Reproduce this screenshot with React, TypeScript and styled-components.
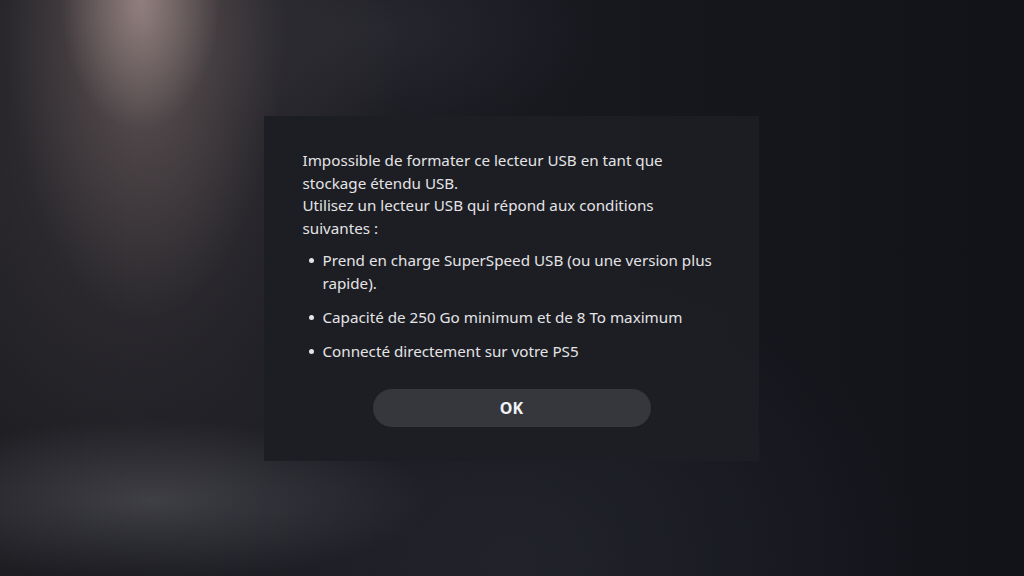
import React from "react";
import styled, { createGlobalStyle } from "styled-components";

const GlobalStyle = createGlobalStyle`
  html, body {
    margin: 0;
    padding: 0;
    width: 100%;
    height: 100%;
    overflow: hidden;
  }
  body {
    background: #14161c;
    font-family: "Noto Sans", "Open Sans", sans-serif;
  }
`;

const Screen = styled.div`
  position: relative;
  width: 1024px;
  height: 576px;
  display: flex;
  align-items: flex-start;
  justify-content: center;
  background:
    radial-gradient(ellipse 80px 130px at 140px 0px, rgba(200, 175, 170, 0.5), rgba(200, 175, 170, 0) 100%),
    radial-gradient(ellipse 140px 300px at 145px 20px, rgba(140, 120, 118, 0.45), rgba(140, 120, 118, 0) 100%),
    radial-gradient(ellipse 260px 440px at 140px 100px, rgba(95, 85, 88, 0.4), rgba(95, 85, 88, 0) 100%),
    radial-gradient(ellipse 280px 80px at 150px 500px, rgba(95, 96, 102, 0.5), rgba(95, 96, 102, 0) 100%),
    radial-gradient(ellipse 220px 120px at 380px 30px, rgba(70, 70, 78, 0.3), rgba(70, 70, 78, 0) 100%),
    radial-gradient(ellipse 400px 300px at 520px 560px, rgba(45, 46, 54, 0.5), rgba(45, 46, 54, 0) 100%),
    linear-gradient(90deg, #1d1d22 0%, #191a20 40%, #14161c 75%, #111319 100%);
`;

const Dialog = styled.div`
  margin-top: 116px;
  width: 495px;
  box-sizing: border-box;
  padding: 33px 38px 34px 39px;
  background: rgba(29, 30, 35, 0.96);
  color: #e4e4e7;
  font-size: 15.2px;
  line-height: 22.5px;
  display: flex;
  flex-direction: column;
  transform: translateX(-1px);
`;

const Message = styled.p`
  margin: 0;
`;

const Conditions = styled.ul`
  margin: 10px 0 0 0;
  padding: 0;
  list-style: none;
  display: flex;
  flex-direction: column;
  gap: 11.5px;
`;

const Condition = styled.li`
  position: relative;
  padding-left: 20px;

  &::before {
    content: "";
    position: absolute;
    left: 6px;
    top: 9px;
    width: 5px;
    height: 5px;
    border-radius: 50%;
    background: #e4e4e7;
  }
`;

const ButtonRow = styled.div`
  display: flex;
  justify-content: center;
  margin-top: 27px;
`;

const OkButton = styled.button`
  width: 278px;
  height: 38px;
  padding: 0;
  border: none;
  border-radius: 19px;
  background: #36373c;
  color: #f2f2f4;
  font-family: "Noto Sans", "Open Sans", sans-serif;
  font-weight: 700;
  font-size: 16px;
  cursor: pointer;
`;

const conditions = [
  "Prend en charge SuperSpeed USB (ou une version plus rapide).",
  "Capacité de 250 Go minimum et de 8 To maximum",
  "Connecté directement sur votre PS5",
];

const App: React.FC = () => {
  return (
    <>
      <GlobalStyle />
      <Screen>
        <Dialog>
          <Message>
            Impossible de formater ce lecteur USB en tant que stockage étendu USB.
            <br />
            Utilisez un lecteur USB qui répond aux conditions suivantes :
          </Message>
          <Conditions>
            {conditions.map((text) => (
              <Condition key={text}>{text}</Condition>
            ))}
          </Conditions>
          <ButtonRow>
            <OkButton>OK</OkButton>
          </ButtonRow>
        </Dialog>
      </Screen>
    </>
  );
};

export default App;
